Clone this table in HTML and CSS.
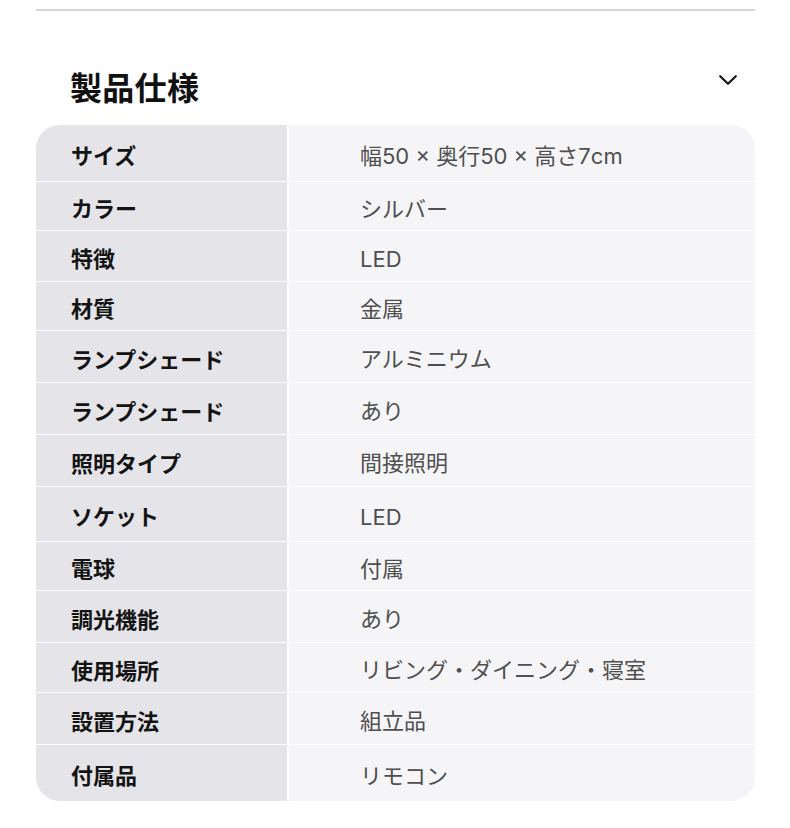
FILE: index.html
```html
<!DOCTYPE html>
<html lang="ja">
<head>
<meta charset="utf-8">
<title>製品仕様</title>
<link rel="stylesheet" href="styles.css">
</head>
<body>
<div class="page">
  <div class="rule"></div>
  <div class="head">
    <h2 class="title">製品仕様</h2>
    <svg class="chevron" width="18" height="10" viewBox="0 0 18 10" aria-hidden="true">
      <polyline points="1.2,1.2 9,8.8 16.8,1.2" fill="none" stroke="#111" stroke-width="2.1" stroke-linecap="round" stroke-linejoin="round"/>
    </svg>
  </div>
  <div class="spec">
    <div class="k">サイズ</div><div class="v">幅50 × 奥行50 × 高さ7cm</div>
    <div class="k">カラー</div><div class="v">シルバー</div>
    <div class="k">特徴</div><div class="v">LED</div>
    <div class="k">材質</div><div class="v">金属</div>
    <div class="k">ランプシェード</div><div class="v">アルミニウム</div>
    <div class="k">ランプシェード</div><div class="v">あり</div>
    <div class="k">照明タイプ</div><div class="v">間接照明</div>
    <div class="k">ソケット</div><div class="v">LED</div>
    <div class="k">電球</div><div class="v">付属</div>
    <div class="k">調光機能</div><div class="v">あり</div>
    <div class="k">使用場所</div><div class="v">リビング・ダイニング・寝室</div>
    <div class="k">設置方法</div><div class="v">組立品</div>
    <div class="k">付属品</div><div class="v">リモコン</div>
  </div>
</div>
</body>
</html>
```
FILE: styles.css
```css
html, body {
  margin: 0;
  padding: 0;
  background: #ffffff;
}

body {
  font-family: "Noto Sans CJK JP", "Noto Sans", sans-serif;
  color: #111111;
}

.page {
  padding: 9px 35px 0 36px;
}

.rule {
  height: 2px;
  background: #d6d6d6;
}

.head {
  display: flex;
  justify-content: space-between;
  align-items: flex-start;
  height: 114px;
  padding: 0 18px 0 34px;
}

.title {
  margin: 55px 0 0;
  font-size: 32px;
  line-height: 40px;
  font-weight: 700;
  color: #111111;
  letter-spacing: 0.3px;
}

.chevron {
  display: block;
  margin-top: 64px;
}

.spec {
  display: grid;
  grid-template-columns: 251px 1fr;
  grid-template-rows: 56px 48px 50px 48px 51px 51px 51px 54px 48px 51px 49px 51px 56px;
  gap: 1px 2px;
  border-radius: 24px;
  overflow: hidden;
  background: #ffffff;
}

.k,
.v {
  display: flex;
  align-items: center;
  font-size: 22px;
  line-height: 30px;
  padding-top: 2px;
}

.k {
  background: #e5e5e9;
  padding-left: 35px;
  font-weight: 700;
  color: #141414;
}

.v {
  background: #f5f5f7;
  padding-top: 5px;
  padding-left: 71px;
  font-family: "Inter", "Noto Sans CJK JP", sans-serif;
  font-weight: 400;
  color: #4f4f4f;
}
```
